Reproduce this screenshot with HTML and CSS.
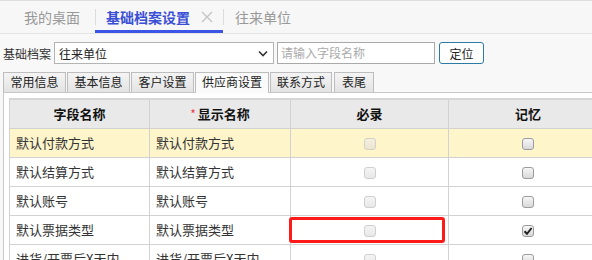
FILE: index.html
```html
<!DOCTYPE html>
<html lang="zh">
<head>
<meta charset="utf-8">
<link rel="stylesheet" href="styles.css">
</head>
<body>
<div class="topbar">
  <div class="ttab ttab-first">我的桌面</div>
  <div class="tsep"></div>
  <div class="ttab ttab-active">基础档案设置<svg class="tclose" width="12" height="12" viewBox="0 0 12 12"><path d="M1 1 L11 11 M11 1 L1 11" stroke="#c4c4c4" stroke-width="1.4" fill="none"/></svg></div>
  <div class="tsep"></div>
  <div class="ttab ttab-last">往来单位</div>
</div>

<div class="toolbar">
  <span class="tlabel">基础档案</span>
  <div class="select">
    <span>往来单位</span>
    <svg class="chev" width="10" height="7" viewBox="0 0 10 7"><path d="M1 1.5 L5 5.5 L9 1.5" fill="none" stroke="#333" stroke-width="1.6"/></svg>
  </div>
  <div class="search">请输入字段名称</div>
  <button class="locate">定位</button>
</div>

<div class="tabs">
  <div class="tab w1">常用信息</div>
  <div class="tab w1">基本信息</div>
  <div class="tab w1">客户设置</div>
  <div class="tab tab-active">供应商设置</div>
  <div class="tab w2">联系方式</div>
  <div class="tab w3">表尾</div>
</div>

<div class="panel">
  <table class="grid">
    <colgroup>
      <col class="c1"><col class="c2"><col class="c3"><col class="c4">
    </colgroup>
    <thead>
      <tr><th>字段名称</th><th><span class="req">*</span>显示名称</th><th>必录</th><th>记忆</th></tr>
    </thead>
    <tbody>
      <tr class="sel"><td>默认付款方式</td><td>默认付款方式</td><td class="ck"><span class="cb dis"></span></td><td class="ck"><span class="cb"></span></td></tr>
      <tr><td>默认结算方式</td><td>默认结算方式</td><td class="ck"><span class="cb dis"></span></td><td class="ck"><span class="cb"></span></td></tr>
      <tr><td>默认账号</td><td>默认账号</td><td class="ck"><span class="cb dis"></span></td><td class="ck"><span class="cb"></span></td></tr>
      <tr><td>默认票据类型</td><td>默认票据类型</td><td class="ck hl"><span class="cb dis"></span><span class="redbox"></span></td><td class="ck"><span class="cb on"><svg width="10" height="10" viewBox="0 0 10 10"><path d="M1.5 5.2 L4 7.8 L8.6 2" fill="none" stroke="#222" stroke-width="2"/></svg></span></td></tr>
      <tr><td>进货/开票后X天内</td><td>进货/开票后X天内</td><td class="ck"><span class="cb dis"></span></td><td class="ck"><span class="cb"></span></td></tr>
    </tbody>
  </table>
</div>
</body>
</html>
```

FILE: styles.css
```css
html, body {
  margin: 0;
  padding: 0;
  background: #f8f8f8;
  overflow: hidden;
  font-family: "Noto Sans CJK SC", "Noto Sans", sans-serif;
  color: #333;
}

.topbar {
  display: flex;
  align-items: center;
  height: 32px;
  border-top: 1px solid #dedede;
  border-bottom: 1px solid #e6e6e6;
  background: #f7f7f7;
}
.ttab {
  position: relative;
  height: 32px;
  line-height: 32px;
  font-size: 14px;
  color: #999;
  box-sizing: border-box;
}
.ttab-first { padding-left: 24px; width: 95px; }
.ttab-last { padding-left: 11px; }
.ttab-active {
  width: 127px;
  padding-left: 10px;
  color: #3b4fd6;
  font-weight: bold;
  display: flex;
  align-items: center;
}
.ttab-active::after {
  content: "";
  position: absolute;
  left: -1px;
  right: 0;
  top: 29px;
  height: 3px;
  background: #3d55e6;
}
.tclose {
  margin-left: 11px;
}
.tsep {
  width: 1px;
  height: 16px;
  background: #dcdcdc;
}

.toolbar {
  display: flex;
  align-items: center;
  margin-top: 8px;
  height: 22px;
  font-size: 12px;
}
.tlabel {
  margin-left: 3px;
  width: 51px;
  color: #333;
}
.select {
  box-sizing: border-box;
  width: 220px;
  height: 22px;
  border: 1px solid #b4b4b4;
  background: #fff;
  display: flex;
  align-items: center;
  justify-content: space-between;
  padding: 0 4px 0 4px;
  color: #222;
}
.chev { margin-right: 1px; }
.search {
  box-sizing: border-box;
  width: 158px;
  height: 22px;
  margin-left: 3px;
  border: 1px solid #a9a9a9;
  background: #fff;
  color: #aaa;
  line-height: 20px;
  padding-left: 3px;
  font-size: 12px;
}
.locate {
  margin-left: 4px;
  width: 45px;
  height: 22px;
  border: 1px solid #2d7aa3;
  border-radius: 3px;
  background: #fff;
  font-family: inherit;
  font-size: 12px;
  color: #222;
  padding: 0;
}

.tabs {
  display: flex;
  margin-top: 8px;
  margin-left: 3px;
  height: 20px;
  align-items: flex-end;
  font-size: 12px;
}
.tab {
  box-sizing: border-box;
  height: 20px;
  line-height: 18px;
  border: 1px solid #bdbdbd;
  border-bottom: none;
  background: linear-gradient(#f4f4f4, #e3e3e3);
  margin-right: 1px;
  text-align: center;
  color: #222;
}
.w1 { width: 63px; }
.w2 { width: 62px; }
.w3 { width: 40px; margin-left: 1px; }
.tab-active {
  width: 74px;
  height: 21px;
  background: #fafafa;
  margin-bottom: -1px;
  position: relative;
  z-index: 1;
}

.panel {
  margin-left: 3px;
  border-left: 1px solid #c8c8c8;
  border-top: 1px solid #c8c8c8;
  background: #fff;
  padding: 5px 0 0 5px;
}

.grid {
  border-collapse: collapse;
  table-layout: fixed;
  width: 598px;
  font-size: 13px;
}
.c1 { width: 140px; }
.c2 { width: 141px; }
.c3 { width: 158px; }
.c4 { width: 159px; }
.grid th, .grid td {
  border: 1px solid #d2d2d2;
  height: 29px;
  padding: 0 0 0 6px;
  box-sizing: border-box;
}
.grid th {
  background: #e9e9e9;
  font-weight: bold;
  color: #111;
  text-align: center;
  padding: 0;
  border-top: 2px solid #d6d6d6;
}
.req {
  color: #e8404a;
  font-weight: normal;
  font-size: 12px;
  margin-right: 2px;
}
.grid td { color: #333; }
.grid tr.sel td { background: #fff5cb; }
.grid td.ck {
  text-align: center;
  padding: 0;
  position: relative;
}
.cb {
  display: inline-block;
  box-sizing: border-box;
  width: 12px;
  height: 12px;
  border: 1px solid #9c9c9c;
  border-radius: 3px;
  background: linear-gradient(#f6f6f6, #d9d9d9);
  vertical-align: middle;
  position: relative;
}
.cb.dis {
  border-color: #cfcfcf;
  background: linear-gradient(#f4f4f4, #e8e8e8);
}
.sel .cb.dis {
  background: linear-gradient(#f5f0df, #ebe5d2);
  border-color: #d4d0c4;
}
.cb svg {
  position: absolute;
  left: 0;
  top: 0;
}
.redbox {
  position: absolute;
  left: -2px;
  right: 3px;
  top: 1px;
  bottom: 1px;
  border: 3px solid #ff1a1a;
  border-radius: 3px;
}
```
